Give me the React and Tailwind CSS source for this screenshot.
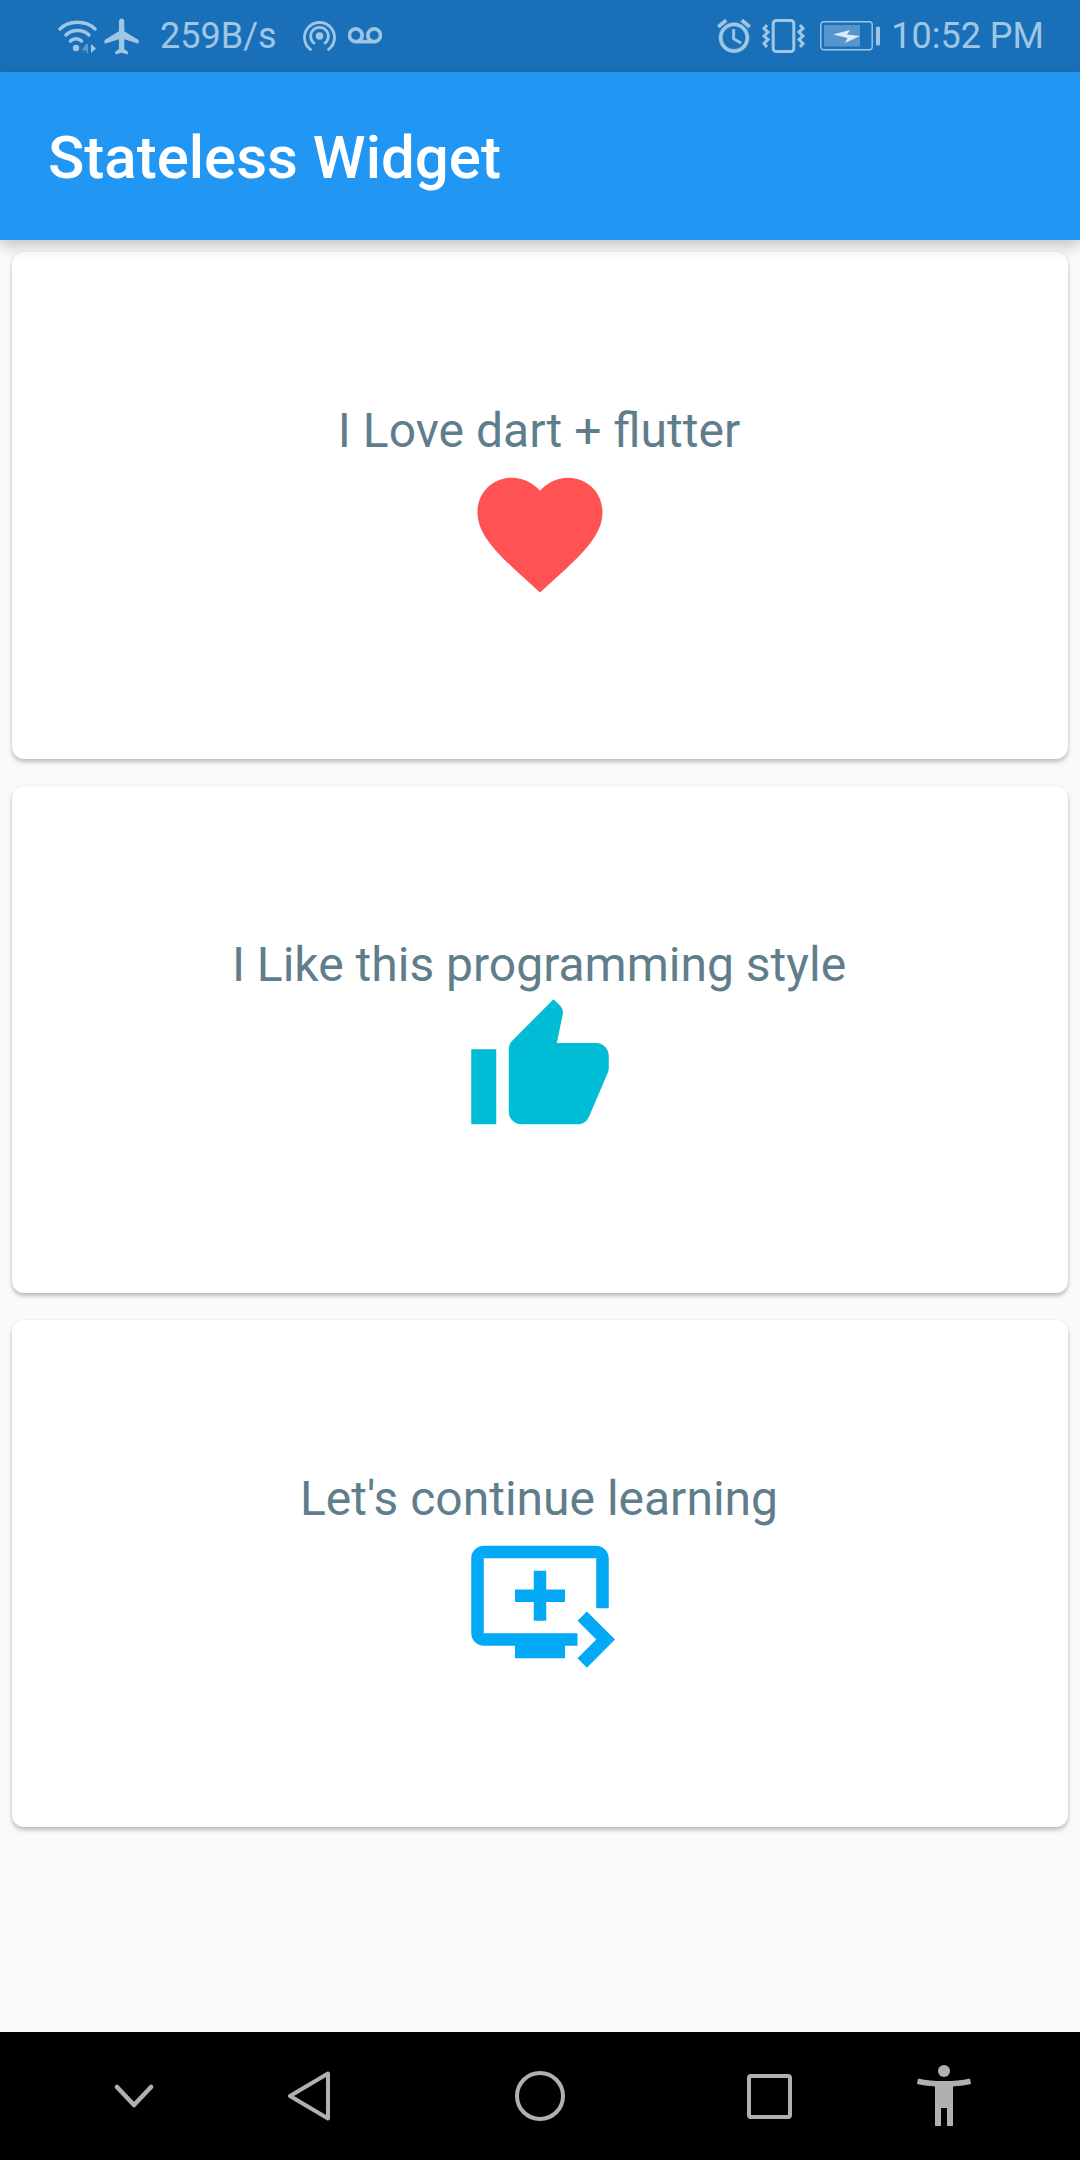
const cards = [
  { label: "I Love dart + flutter", icon: "heart" },
  { label: "I Like this programming style", icon: "thumb" },
  { label: "Let's continue learning", icon: "queue" },
];

const paths = {
  heart: "M12 21.35l-1.45-1.32C5.4 15.36 2 12.28 2 8.5 2 5.42 4.42 3 7.5 3c1.74 0 3.41.81 4.5 2.09C13.09 3.81 14.76 3 16.5 3 19.58 3 22 5.42 22 8.5c0 3.78-3.4 6.86-8.55 11.54L12 21.35z",
  thumb: "M1 21h4V9H1v12zm22-11c0-1.1-.9-2-2-2h-6.31l.95-4.57.03-.32c0-.41-.17-.79-.44-1.06L14.17 1 7.59 7.59C7.22 7.95 7 8.45 7 9v10c0 1.1.9 2 2 2h9c.83 0 1.54-.5 1.84-1.22l3.02-7.05c.09-.23.14-.47.14-.73v-2z",
  queue: "M21 3H3c-1.11 0-2 .89-2 2v12c0 1.1.89 2 2 2h5v2h8v-2h2v-2H3V5h18v8h2V5c0-1.11-.9-2-2-2zm-8 7V7h-2v3H8v2h3v3h2v-3h3v-2h-3zm11 8l-4.5 4.5L18 21l3-3-3-3 1.5-1.5L24 18z",
};

const iconColors = {
  heart: "text-[#ff5252]",
  thumb: "text-[#00bcd4]",
  queue: "text-[#03a9f4]",
};

function CardIcon({ name }) {
  return (
    <svg viewBox="0 0 24 24" className={"w-[150px] h-[150px] " + iconColors[name]} fill="currentColor">
      <path d={paths[name]} />
    </svg>
  );
}

function WifiIcon() {
  return (
    <svg width="39" height="33" viewBox="0 0 39 33" fill="none" stroke="currentColor" strokeWidth="3.4" strokeLinecap="round">
      <path d="M2 9C11 0 28 0 37 9" />
      <path d="M8 15C14 9 25 9 31 15" />
      <path d="M12.500 21C15.500 18 20.500 18 23.500 21" />
      <circle cx="18" cy="28" r="3.200" fill="currentColor" stroke="none" />
      <path d="M33 24l5 4.500-5 4.500z" fill="currentColor" stroke="none" />
      <path d="M30 24v9h-1.500v-2.500h-4v-1.500l4-5z" fill="currentColor" stroke="none" opacity="0.5" />
    </svg>
  );
}

function PlaneIcon() {
  return (
    <svg width="43" height="43" viewBox="0 0 24 24" fill="currentColor">
      <path d="M21 16v-2l-8-5V3.500c0-.83-.67-1.500-1.500-1.500S10 2.670 10 3.500V9l-8 5v2l8-2.500V19l-2 1.500V22l3.500-1 3.500 1v-1.500L13 19v-5.500l8 2.500z" />
    </svg>
  );
}

function HotspotIcon() {
  return (
    <svg width="33" height="32" viewBox="0 0 33 32" fill="none" stroke="currentColor" strokeWidth="2.8" strokeLinecap="round">
      <path d="M7.500 29.500A15 15 0 1 1 25.500 29.500" />
      <path d="M11 23A8.800 8.800 0 1 1 22 23" />
      <circle cx="16.500" cy="16" r="3.800" fill="currentColor" stroke="none" />
    </svg>
  );
}

function VoicemailIcon() {
  return (
    <svg width="34" height="34" viewBox="0 0 24 24" fill="currentColor" stroke="currentColor" strokeWidth="0.6">
      <path d="M18.500 6C15.460 6 13 8.460 13 11.500c0 1.330.47 2.550 1.260 3.500H9.740c.79-.95 1.260-2.170 1.260-3.500C11 8.460 8.540 6 5.500 6S0 8.460 0 11.500 2.460 17 5.500 17h13c3.040 0 5.500-2.460 5.500-5.500S21.540 6 18.500 6zm-13 9C3.570 15 2 13.430 2 11.500S3.570 8 5.500 8 9 9.570 9 11.500 7.430 15 5.500 15zm13 0c-1.930 0-3.500-1.570-3.500-3.500S16.570 8 18.500 8 22 9.570 22 11.500 20.430 15 18.500 15z" />
    </svg>
  );
}

function AlarmIcon() {
  return (
    <svg width="40" height="40" viewBox="0 0 24 24" fill="currentColor" stroke="currentColor" strokeWidth="0.3">
      <path d="M22 5.720l-4.600-3.860-1.290 1.530 4.600 3.860L22 5.720zM7.880 3.390L6.600 1.860 2 5.710l1.290 1.530 4.590-3.850zM12.500 8H11v6l4.750 2.850.75-1.230-4-2.370V8zM12 4c-4.970 0-9 4.030-9 9s4.020 9 9 9c4.970 0 9-4.030 9-9s-4.030-9-9-9zm0 16c-3.870 0-7-3.130-7-7s3.130-7 7-7 7 3.130 7 7-3.130 7-7 7z" />
    </svg>
  );
}

function VibrateIcon() {
  return (
    <svg width="43" height="34" viewBox="0 0 43 34" fill="none" stroke="currentColor" strokeWidth="3">
      <rect x="11.200" y="1.500" width="20.600" height="31" rx="3" />
      <path d="M5 6l-3 3.500 4 3.500-4 4 4 3.500-4 4 3 3.500" />
      <path d="M38 6l3 3.500-4 3.500 4 4-4 3.500 4 4-3 3.500" />
    </svg>
  );
}

function BatteryIcon() {
  return (
    <svg width="60" height="30" viewBox="0 0 60 30" fill="none">
      <rect x="0.800" y="0.800" width="51.400" height="28" rx="3" stroke="currentColor" strokeWidth="1.400" />
      <rect x="4" y="4" width="36" height="21.500" fill="currentColor" opacity="0.45" />
      <rect x="56" y="5.500" width="4" height="19" rx="1.500" fill="currentColor" />
      <path d="M13 13.500L30 9L27 13.500L40 15L25 22L27.500 17Z" fill="#dcebf7" />
    </svg>
  );
}

function BackIcon() {
  return (
    <svg width="44" height="50" viewBox="0 0 44 50" fill="none" stroke="#b0b0b0" strokeWidth="4" strokeLinejoin="round">
      <path d="M3 25L41 2.500V47.500Z" />
    </svg>
  );
}

function AccessIcon() {
  return (
    <svg width="54" height="62" viewBox="0 0 54 62" fill="#b0b0b0">
      <circle cx="27" cy="6" r="6" />
      <path d="M1 13.500C9 15.500 18 16 27 16S45 15.500 53 13.500L54 19C47 20.500 41 21 36 21.500V61H30V43H24V61H18V21.500C13 21 7 20.500 0 19Z" />
    </svg>
  );
}

function App() {
  return (
    <div className="w-[1080px] h-[2160px] flex flex-col bg-[#fafafa] overflow-hidden" style={{ fontFamily: "Roboto, sans-serif" }}>
      <div className="h-[72px] shrink-0 bg-[#1a70b8] flex items-center justify-between pl-[58px] pr-[36px] text-[#a0c6e5] text-[36px] leading-none">
        <div className="flex items-center">
          <WifiIcon />
          <div className="ml-[4px]"><PlaneIcon /></div>
          <span className="ml-[16px]">259B/s</span>
          <div className="ml-[26px]"><HotspotIcon /></div>
          <div className="ml-[12px]"><VoicemailIcon /></div>
        </div>
        <div className="flex items-center">
          <AlarmIcon />
          <div className="ml-[8px]"><VibrateIcon /></div>
          <div className="ml-[15px]"><BatteryIcon /></div>
          <span className="ml-[11px]">10:52 PM</span>
        </div>
      </div>

      <header className="relative h-[168px] shrink-0 bg-[#2196f3] flex items-center pl-[48px] pt-[4px] shadow-[0_6px_14px_rgba(0,0,0,0.22)]">
        <h1 className="text-white text-[60px] font-medium leading-none">Stateless Widget</h1>
      </header>

      <main className="flex-1 flex flex-col gap-[27px] px-[12px] pt-[12px]">
        {cards.map((c) => (
          <div key={c.icon} className="h-[507px] bg-white rounded-[12px] shadow-[0_3px_4px_rgba(0,0,0,0.24),0_0_2px_rgba(0,0,0,0.08)] flex flex-col items-center justify-center">
            <p className="text-[#607d8b] text-[48px] leading-[56px] mt-[1px] mr-[2px]">{c.label}</p>
            <CardIcon name={c.icon} />
          </div>
        ))}
      </main>

      <nav className="relative h-[128px] shrink-0 bg-black flex items-center pl-[114px]">
        <svg width="40" height="24" viewBox="0 0 40 24" fill="none" stroke="#b0b0b0" strokeWidth="4.5" strokeLinecap="round" strokeLinejoin="round">
          <path d="M3 3l17 18 17-18" />
        </svg>
        <div className="ml-[133px]"><BackIcon /></div>
        <div className="ml-[184px] w-[50px] h-[50px] rounded-full border-[4px] border-[#b0b0b0]" />
        <div className="ml-[182px] w-[45px] h-[45px] rounded-[4px] border-[4px] border-[#b0b0b0]" />
        <div className="ml-[125px]"><AccessIcon /></div>
      </nav>
    </div>
  );
}

export default App;
